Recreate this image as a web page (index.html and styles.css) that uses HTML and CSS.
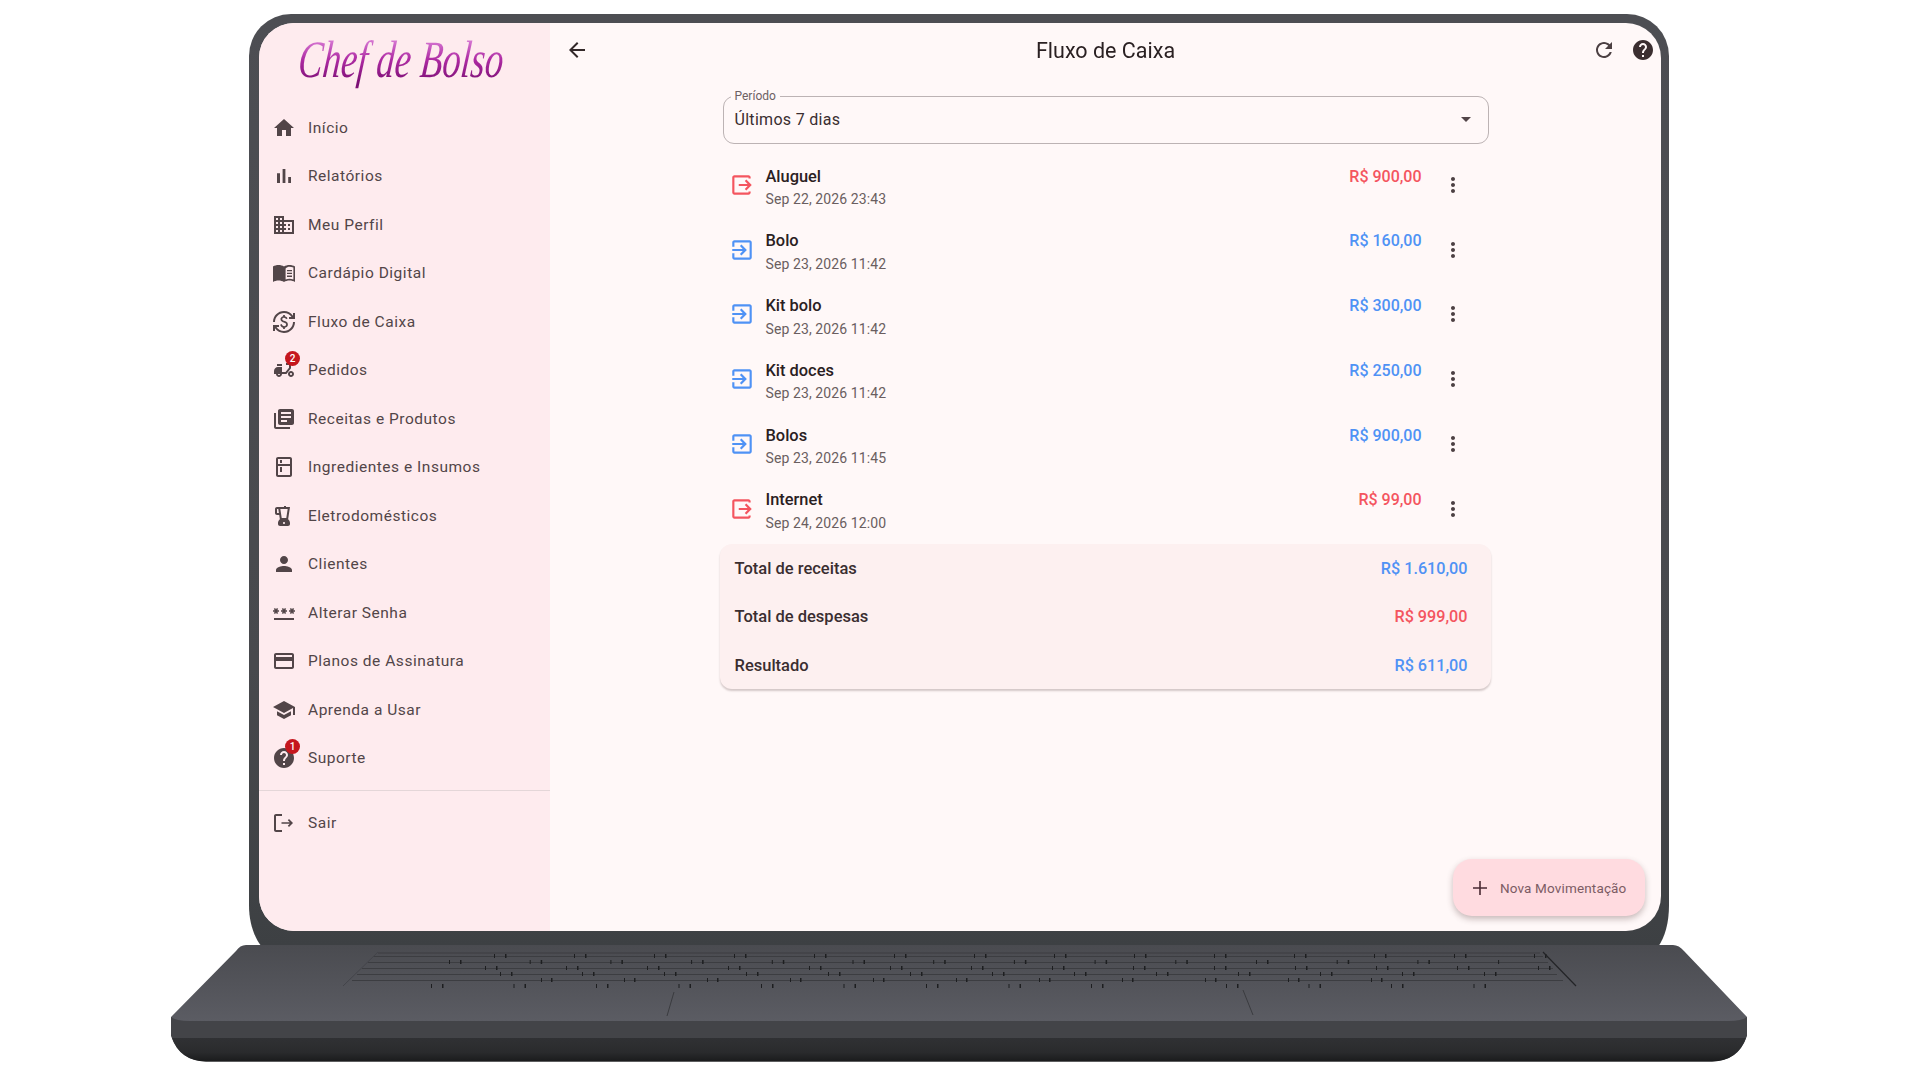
FILE: index.html
```html
<!DOCTYPE html>
<html lang="pt-BR">
<head>
<meta charset="utf-8">
<title>Chef de Bolso - Fluxo de Caixa</title>
<link rel="stylesheet" href="styles.css">
</head>
<body>
<svg class="sprite" aria-hidden="true">
  <symbol id="i-home" viewBox="0 0 24 24"><path d="M10 20v-6h4v6h5v-8h3L12 3 2 12h3v8z"/></symbol>
  <symbol id="i-bar" viewBox="0 0 24 24"><path d="M5 9.2h3V19H5zM10.6 5h2.8v14h-2.8zm5.6 8H19v6h-2.8z"/></symbol>
  <symbol id="i-domain" viewBox="0 0 24 24"><path d="M12 7V3H2v18h20V7H12zM6 19H4v-2h2v2zm0-4H4v-2h2v2zm0-4H4V9h2v2zm0-4H4V5h2v2zm4 12H8v-2h2v2zm0-4H8v-2h2v2zm0-4H8V9h2v2zm0-4H8V5h2v2zm10 12h-8v-2h2v-2h-2v-2h2v-2h-2V9h8v10zm-2-8h-2v2h2v-2zm0 4h-2v2h2v-2z"/></symbol>
  <symbol id="i-book" viewBox="0 0 24 24"><path d="M1 5.5C2.500 4.500 4.500 4 6.500 4 8.500 4 10.500 4.500 12 5.500V21c-1.500-1-3.500-1.500-5.500-1.500S2.500 20 1 21zM12 5.500C13.500 4.500 15.500 4 17.500 4s4 .5 5.500 1.500V21c-1.500-1-3.500-1.500-5.500-1.500S13.500 20 12 21zm1.600 2V18.500c1.200-.5 2.600-.7 3.900-.7 1.200 0 2.400.2 3.900.6V6.600c-1.300-.6-2.600-.9-3.900-.9-1.400 0-2.800.6-3.900 1.800zM15 9h5v1.300h-5zm0 2.800h5v1.300h-5zm0 2.800h5v1.300h-5z" fill-rule="evenodd"/></symbol>
  <symbol id="i-exchange" viewBox="0 0 24 24"><path d="M12.890 11.100c-1.780-.59-2.640-.96-2.640-1.900 0-1.020 1.110-1.390 1.810-1.390 1.310 0 1.790.99 1.900 1.340l1.580-.67c-.15-.44-.82-1.910-2.660-2.230V5h-1.750v1.260c-2.600.56-2.620 2.850-2.620 2.960 0 2.270 2.250 2.910 3.350 3.310 1.580.56 2.280 1.070 2.280 2.030 0 1.130-1.050 1.610-1.980 1.610-1.820 0-2.340-1.870-2.400-2.090l-1.660.67c.63 2.190 2.280 2.780 3.020 2.960V19h1.750v-1.240c.52-.09 3.020-.59 3.020-3.220.01-1.390-.6-2.610-2.990-3.440zM3 21H1v-6h6v2H4.520c1.650 2.410 4.410 4 7.480 4 4.970 0 9-4.030 9-9h2c0 6.080-4.920 11-11 11-3.720 0-7.010-1.850-9-4.670V21zm-2-9C1 5.920 5.920 1 12 1c3.720 0 7.010 1.850 9 4.670V3h2v6h-6V7h2.480C17.830 4.590 15.070 3 12 3c-4.970 0-9 4.030-9 9H1z"/></symbol>
  <symbol id="i-moped" viewBox="0 0 24 24"><path d="M19 7c0-1.100-.9-2-2-2h-3v2h3v2.650L13.520 14H10V9H6c-2.210 0-4 1.790-4 4v3h2c0 1.660 1.340 3 3 3s3-1.340 3-3h4.480L19 10.350V7zM7 17c-.55 0-1-.45-1-1h2c0 .55-.45 1-1 1zM5 6h5v2H5zM19 13c-1.660 0-3 1.340-3 3s1.340 3 3 3 3-1.340 3-3-1.340-3-3-3zm0 4c-.55 0-1-.45-1-1s.45-1 1-1 1 .45 1 1-.45 1-1 1z"/></symbol>
  <symbol id="i-library" viewBox="0 0 24 24"><path d="M4 6H2v14c0 1.100.9 2 2 2h14v-2H4V6zm16-4H8c-1.100 0-2 .9-2 2v12c0 1.100.9 2 2 2h12c1.100 0 2-.9 2-2V4c0-1.100-.9-2-2-2zm-1 9H9V9h10v2zm-4 4H9v-2h6v2zm4-8H9V5h10v2z"/></symbol>
  <symbol id="i-kitchen" viewBox="0 0 24 24"><path d="M18 2.010L6 2c-1.100 0-2 .89-2 2v16c0 1.100.9 2 2 2h12c1.100 0 2-.9 2-2V4c0-1.110-.9-1.990-2-1.990zM18 20H6v-9.020h12V20zm0-11H6V4h12v5zM8 5h2v3H8zm0 7h2v5H8z"/></symbol>
  <symbol id="i-blender" viewBox="0 0 24 24"><path d="M16.130 15.130L18 3h-4V2h-2v1H5c-1.100 0-2 .9-2 2v4c0 1.100.9 2 2 2h2.230l.64 4.130C6.740 16.050 6 17.430 6 19v1c0 1.100.9 2 2 2h8c1.100 0 2-.9 2-2v-1c0-1.570-.74-2.950-1.870-3.870zM5 9V5h1.310l.62 4H5zm7 11c-.55 0-1-.45-1-1s.45-1 1-1 1 .45 1 1-.45 1-1 1zm2.290-6H9.720L8.330 5h7.340l-1.380 9z"/></symbol>
  <symbol id="i-person" viewBox="0 0 24 24"><path d="M12 12c2.210 0 4-1.790 4-4s-1.790-4-4-4-4 1.790-4 4 1.790 4 4 4zm0 2c-2.670 0-8 1.340-8 4v2h16v-2c0-2.660-5.330-4-8-4z"/></symbol>
  <symbol id="i-password" viewBox="0 0 24 24"><path d="M2 17h20v2H2zm1.150-4.050L4 11.470l.85 1.480 1.300-.75-.85-1.480H7v-1.500H5.300l.85-1.470L4.850 7 4 8.470 3.150 7l-1.300.75.85 1.470H1v1.500h1.700l-.85 1.480 1.300.75zm6.700-.75l1.300.75.85-1.480.85 1.480 1.300-.75-.85-1.480H15v-1.500h-1.700l.85-1.470-1.300-.75L12 8.470 11.150 7l-1.300.75.85 1.470H9v1.500h1.700l-.85 1.480zM23 9.220h-1.700l.85-1.470-1.300-.75L20 8.470 19.150 7l-1.300.75.85 1.470H17v1.500h1.700l-.85 1.480 1.300.75.85-1.480.85 1.480 1.300-.75-.85-1.480H23v-1.500z"/></symbol>
  <symbol id="i-card" viewBox="0 0 24 24"><path d="M20 4H4c-1.110 0-1.990.89-1.990 2L2 18c0 1.110.89 2 2 2h16c1.110 0 2-.89 2-2V6c0-1.110-.89-2-2-2zm0 14H4v-6h16v6zm0-10H4V6h16v2z"/></symbol>
  <symbol id="i-school" viewBox="0 0 24 24"><path d="M5 13.180v4L12 21l7-3.820v-4L12 17l-7-3.820zM12 3L1 9l11 6 9-4.910V17h2V9L12 3z"/></symbol>
  <symbol id="i-help" viewBox="0 0 24 24"><path d="M12 2C6.480 2 2 6.480 2 12s4.480 10 10 10 10-4.480 10-10S17.520 2 12 2zm1 17h-2v-2h2v2zm2.070-7.750l-.9.920C13.450 12.900 13 13.500 13 15h-2v-.5c0-1.100.45-2.100 1.170-2.830l1.240-1.260c.37-.36.59-.86.59-1.410 0-1.100-.9-2-2-2s-2 .9-2 2H8c0-2.210 1.790-4 4-4s4 1.790 4 4c0 .88-.36 1.680-.93 2.250z"/></symbol>
  <symbol id="i-logout" viewBox="0 0 24 24"><path d="M17 8l-1.200 1.200L17.800 11.200H9.500v1.600h8.300l-2 2L17 16l4-4zM4 5h6V3H4c-1.100 0-2 .9-2 2v14c0 1.100.9 2 2 2h6v-2H4V5z"/></symbol>
  <symbol id="i-back" viewBox="0 0 24 24"><path d="M20 11H7.830l5.590-5.590L12 4l-8 8 8 8 1.410-1.410L7.830 13H20v-2z"/></symbol>
  <symbol id="i-refresh" viewBox="0 0 24 24"><path d="M17.650 6.350C16.200 4.900 14.210 4 12 4c-4.420 0-7.990 3.580-7.990 8s3.570 8 7.990 8c3.730 0 6.840-2.550 7.730-6h-2.080c-.82 2.330-3.040 4-5.650 4-3.310 0-6-2.690-6-6s2.690-6 6-6c1.660 0 3.140.69 4.220 1.780L13 11h7V4l-2.350 2.350z"/></symbol>
  <symbol id="i-more" viewBox="0 0 24 24"><path d="M12 8c1.100 0 2-.9 2-2s-.9-2-2-2-2 .9-2 2 .9 2 2 2zm0 2c-1.100 0-2 .9-2 2s.9 2 2 2 2-.9 2-2-.9-2-2-2zm0 6c-1.100 0-2 .9-2 2s.9 2 2 2 2-.9 2-2-.9-2-2-2z"/></symbol>
  <symbol id="i-in" viewBox="0 0 24 24"><path d="M10.090 15.590L11.500 17l5-5-5-5-1.410 1.410L12.670 11H3v2h9.670l-2.580 2.590zM19 3H5c-1.110 0-2 .9-2 2v4h2V5h14v14H5v-4H3v4c0 1.100.89 2 2 2h14c1.100 0 2-.9 2-2V5c0-1.100-.9-2-2-2z"/></symbol>
  <symbol id="i-out" viewBox="0 0 24 24"><path d="M14.590 15.590L16 17l5-5-5-5-1.410 1.410L17.170 11H9v2h8.170l-2.580 2.590zM5 3h13c1.100 0 2 .9 2 2v1h-2V5H5v14h13v-1h2v1c0 1.100-.9 2-2 2H5c-1.110 0-2-.9-2-2V5c0-1.100.89-2 2-2z"/></symbol>
  <symbol id="i-plus" viewBox="0 0 24 24"><path d="M19 12.800h-6.200V19h-1.600v-6.200H5v-1.600h6.200V5h1.600v6.200H19z"/></symbol>
</svg>

<svg class="laptop" viewBox="0 0 1920 1080" aria-hidden="true">
  <defs>
    <linearGradient id="lid" x1="0" y1="0" x2="0" y2="1">
      <stop offset="0" stop-color="#4d4e53"/><stop offset="0.7" stop-color="#48494d"/><stop offset="1" stop-color="#3d4043"/>
    </linearGradient>
    <linearGradient id="deck" x1="0" y1="0" x2="0" y2="1">
      <stop offset="0" stop-color="#4a4b50"/><stop offset="1" stop-color="#5b5c63"/>
    </linearGradient>
    <linearGradient id="lip" x1="0" y1="0" x2="0" y2="1">
      <stop offset="0" stop-color="#303134"/><stop offset="0.6" stop-color="#2a2b2d"/><stop offset="1" stop-color="#1a1b1c"/>
    </linearGradient>
    <filter id="soft" x="-5%" y="-50%" width="110%" height="200%"><feGaussianBlur stdDeviation="4"/></filter>
  </defs>
  <path d="M176 1060H1742" stroke="#a8a8a8" stroke-width="3" filter="url(#soft)"/>
  <path d="M249 56a42 42 0 0 1 42-42H1627a42 42 0 0 1 42 42V905c0 18-4 32-11 42H262c-8-10-13-24-13-42z" fill="url(#lid)"/>
  <path d="M171 1017H1747V1036Q1738 1061 1712 1061.500H206Q180 1061 171 1036z" fill="#434448"/>
  <path d="M246 945H1673q6 0 11 6L1747 1017Q1742 1021 1728 1021H190Q176 1021 171 1017L236 951q4-6 10-6z" fill="url(#deck)"/>
  <path d="M172 1038H1746Q1738 1061 1712 1061.500H206Q180 1061 172 1038z" fill="url(#lip)"/>
  <g class="kb-rows">
    <path d="M378 953H1540M373 956.500H1543M368 962.500H1548M362 968.500H1553M357 974.500H1557M352 980.500H1563"/>
  </g>
  <g class="kb-ticks">
    <line x1="494" x2="1548" y1="956" y2="956" stroke-dasharray="1 10 1.500 67.500"/>
    <line x1="449" x2="1500" y1="962" y2="962" stroke-dasharray="1 10 1.500 68.200"/>
    <line x1="485" x2="1555" y1="968" y2="968" stroke-dasharray="1 10 1.500 68.500"/>
    <line x1="500" x2="1500" y1="974" y2="974" stroke-dasharray="1 10 1.500 69.500"/>
    <line x1="541" x2="1450" y1="980" y2="980" stroke-dasharray="1 9 1.500 71.500"/>
    <line x1="431" x2="1130" y1="986" y2="986" stroke-dasharray="1 10 1.500 70"/>
    <line x1="1226" x2="1490" y1="986" y2="986" stroke-dasharray="1 10 1.500 70"/>
  </g>
  <path class="kb-edge" d="M1543 952L1576 986"/>
  <path class="kb-pad" d="M674 992L667 1016M1243 990L1253 1015"/>
  <path class="kb-soft" d="M378 952L343 986"/>
</svg>

<div class="screen">
  <aside class="sidebar">
    <div class="logo"><span class="logo-text">Chef de Bolso</span></div>
    <nav class="nav">
      <a class="nav-item"><span class="nav-icon"><svg><use href="#i-home"/></svg></span>Início</a>
      <a class="nav-item"><span class="nav-icon"><svg><use href="#i-bar"/></svg></span>Relatórios</a>
      <a class="nav-item"><span class="nav-icon"><svg><use href="#i-domain"/></svg></span>Meu Perfil</a>
      <a class="nav-item"><span class="nav-icon"><svg><use href="#i-book"/></svg></span>Cardápio Digital</a>
      <a class="nav-item"><span class="nav-icon"><svg><use href="#i-exchange"/></svg></span>Fluxo de Caixa</a>
      <a class="nav-item"><span class="nav-icon"><svg><use href="#i-moped"/></svg><b class="badge">2</b></span>Pedidos</a>
      <a class="nav-item"><span class="nav-icon"><svg><use href="#i-library"/></svg></span>Receitas e Produtos</a>
      <a class="nav-item"><span class="nav-icon"><svg><use href="#i-kitchen"/></svg></span>Ingredientes e Insumos</a>
      <a class="nav-item"><span class="nav-icon"><svg><use href="#i-blender"/></svg></span>Eletrodomésticos</a>
      <a class="nav-item"><span class="nav-icon"><svg><use href="#i-person"/></svg></span>Clientes</a>
      <a class="nav-item"><span class="nav-icon"><svg><use href="#i-password"/></svg></span>Alterar Senha</a>
      <a class="nav-item"><span class="nav-icon"><svg><use href="#i-card"/></svg></span>Planos de Assinatura</a>
      <a class="nav-item"><span class="nav-icon"><svg><use href="#i-school"/></svg></span>Aprenda a Usar</a>
      <a class="nav-item"><span class="nav-icon"><svg><use href="#i-help"/></svg><b class="badge">1</b></span>Suporte</a>
    </nav>
    <div class="nav-divider"></div>
    <a class="nav-item"><span class="nav-icon"><svg><use href="#i-logout"/></svg></span>Sair</a>
  </aside>

  <main class="main">
    <header class="appbar">
      <svg class="bar-icon back"><use href="#i-back"/></svg>
      <h1 class="title">Fluxo de Caixa</h1>
      <div class="bar-actions">
        <svg class="bar-icon refresh"><use href="#i-refresh"/></svg>
        <svg class="bar-icon help"><use href="#i-help"/></svg>
      </div>
    </header>

    <section class="content">
      <div class="select">
        <span class="select-label">Período</span>
        <span class="select-value">Últimos 7 dias</span>
        <span class="select-arrow"></span>
      </div>

      <ul class="list">
        <li class="row expense">
          <svg class="row-icon"><use href="#i-out"/></svg>
          <div class="row-text"><div class="row-title">Aluguel</div><div class="row-date">Sep 22, 2026 23:43</div></div>
          <div class="row-amount">R$ 900,00</div>
          <svg class="row-more"><use href="#i-more"/></svg>
        </li>
        <li class="row income">
          <svg class="row-icon"><use href="#i-in"/></svg>
          <div class="row-text"><div class="row-title">Bolo</div><div class="row-date">Sep 23, 2026 11:42</div></div>
          <div class="row-amount">R$ 160,00</div>
          <svg class="row-more"><use href="#i-more"/></svg>
        </li>
        <li class="row income">
          <svg class="row-icon"><use href="#i-in"/></svg>
          <div class="row-text"><div class="row-title">Kit bolo</div><div class="row-date">Sep 23, 2026 11:42</div></div>
          <div class="row-amount">R$ 300,00</div>
          <svg class="row-more"><use href="#i-more"/></svg>
        </li>
        <li class="row income">
          <svg class="row-icon"><use href="#i-in"/></svg>
          <div class="row-text"><div class="row-title">Kit doces</div><div class="row-date">Sep 23, 2026 11:42</div></div>
          <div class="row-amount">R$ 250,00</div>
          <svg class="row-more"><use href="#i-more"/></svg>
        </li>
        <li class="row income">
          <svg class="row-icon"><use href="#i-in"/></svg>
          <div class="row-text"><div class="row-title">Bolos</div><div class="row-date">Sep 23, 2026 11:45</div></div>
          <div class="row-amount">R$ 900,00</div>
          <svg class="row-more"><use href="#i-more"/></svg>
        </li>
        <li class="row expense">
          <svg class="row-icon"><use href="#i-out"/></svg>
          <div class="row-text"><div class="row-title">Internet</div><div class="row-date">Sep 24, 2026 12:00</div></div>
          <div class="row-amount">R$ 99,00</div>
          <svg class="row-more"><use href="#i-more"/></svg>
        </li>
      </ul>

      <div class="summary">
        <div class="summary-row income"><span class="summary-label">Total de receitas</span><span class="summary-value">R$ 1.610,00</span></div>
        <div class="summary-row expense"><span class="summary-label">Total de despesas</span><span class="summary-value">R$ 999,00</span></div>
        <div class="summary-row income"><span class="summary-label">Resultado</span><span class="summary-value">R$ 611,00</span></div>
      </div>
    </section>

    <button class="fab"><svg class="fab-icon"><use href="#i-plus"/></svg>Nova Movimentação</button>
  </main>
</div>
</body>
</html>
```

FILE: styles.css
```css
* { box-sizing: border-box; }

html, body {
  margin: 0;
  width: 1920px;
  height: 1080px;
  overflow: hidden;
  background: #fff;
}

body {
  position: relative;
  font-family: Roboto, "Liberation Sans", sans-serif;
  color: #241a1c;
}

.sprite { display: none; }

.laptop {
  position: absolute;
  left: 0;
  top: 0;
  width: 1920px;
  height: 1080px;
}

.kb-rows path { fill: none; stroke: #3c3d41; stroke-width: 1.200; }
.kb-ticks line { stroke: #1d1e20; stroke-width: 4; }
.kb-edge { fill: none; stroke: #232427; stroke-width: 1.200; }
.kb-pad { fill: none; stroke: #3a3b3f; stroke-width: 1; }
.kb-soft { fill: none; stroke: #43444a; stroke-width: 1; }

/* Screen */
.screen {
  position: absolute;
  left: 259px;
  top: 23px;
  width: 1402px;
  height: 908px;
  display: flex;
  border-radius: 35px;
  overflow: hidden;
  background: #fff8f8;
  filter: blur(0.35px);
}

/* Sidebar */
.sidebar {
  width: 291px;
  flex: none;
  background: #feebee;
  display: flex;
  flex-direction: column;
}

.logo {
  height: 80.500px;
  padding: 4px 0 0 43px;
}

.logo-text {
  display: inline-block;
  font-family: "Liberation Serif", serif;
  font-style: italic;
  font-size: 42px;
  line-height: 52px;
  white-space: nowrap;
  transform-origin: left top;
  transform: scale(0.87, 1.25) skewX(-8deg);
  background: linear-gradient(180deg, #e28de0 12%, #ae2ba3 50%, #7d0f75 85%);
  -webkit-background-clip: text;
  background-clip: text;
  color: transparent;
}

.nav { display: flex; flex-direction: column; }

.nav-item {
  height: 48.500px;
  display: flex;
  align-items: center;
  padding-left: 13px;
  font-size: 15.500px;
  letter-spacing: 0.520px;
  color: #524548;
  white-space: nowrap;
}

.nav-icon {
  position: relative;
  width: 24px;
  height: 24px;
  margin-right: 12px;
  flex: none;
}

.nav-icon svg { width: 24px; height: 24px; fill: #524548; display: block; }

.badge {
  position: absolute;
  right: -4px;
  top: -7px;
  width: 15px;
  height: 15px;
  border-radius: 50%;
  background: #c5161d;
  color: #fff;
  font-size: 10px;
  font-weight: 500;
  line-height: 15px;
  letter-spacing: 0;
  text-align: center;
}

.nav-divider {
  height: 1px;
  margin: 7.500px 0 7.500px;
  background: #e4d6d8;
}

/* Main */
.main {
  position: relative;
  flex: 1;
  display: flex;
  flex-direction: column;
  min-width: 0;
}

.appbar {
  height: 54px;
  flex: none;
  display: flex;
  align-items: center;
  justify-content: space-between;
  padding: 0 6px 0 15px;
  position: relative;
}

.title {
  position: absolute;
  left: 0;
  right: 0;
  margin: 0;
  text-align: center;
  font-size: 21.500px;
  font-weight: 400;
  color: #2a2022;
}

.bar-icon { width: 24px; height: 24px; fill: #332829; display: block; }
.bar-actions { display: flex; gap: 15px; align-items: center; }
.bar-icon.help { fill: #3b2e30; }
.bar-icon.refresh { fill: #4c4043; }

.content {
  width: 764px;
  margin: 0 auto;
  padding-top: 18.500px;
}

.select {
  position: relative;
  height: 48px;
  margin: 0 -1px;
  border: 1.500px solid #bcb3b4;
  border-radius: 11px;
  display: flex;
  align-items: center;
  padding: 0 11px;
}

.select-label {
  position: absolute;
  left: 7px;
  top: -8px;
  padding: 0 4px;
  background: #fff8f8;
  font-size: 12px;
  line-height: 14px;
  color: #6d6163;
}

.select-value {
  font-size: 16px;
  letter-spacing: 0.300px;
  color: #3a2e30;
}

.select-arrow {
  position: absolute;
  right: 17px;
  top: 20px;
  width: 0;
  height: 0;
  border-left: 5px solid transparent;
  border-right: 5px solid transparent;
  border-top: 5px solid #524548;
}

.list {
  list-style: none;
  margin: 9px 0 0;
  padding: 0;
}

.row {
  height: 64.800px;
  display: flex;
  align-items: center;
  padding-left: 5px;
}

.row-icon { width: 26px; height: 26px; flex: none; display: block; }
.row-text {
  flex: 1;
  margin-left: 11px;
  align-self: flex-start;
  padding-top: 14px;
}
.row-title { font-size: 16.400px; font-weight: 500; line-height: 20px; color: #2a2022; }
.row-date { font-size: 14px; line-height: 18px; margin-top: 3.500px; letter-spacing: 0.100px; color: #6a5e60; }
.row-amount {
  align-self: flex-start;
  padding-top: 14px;
  font-size: 16px;
  font-weight: 500;
  line-height: 20px;
  white-space: nowrap;
}
.row-more { width: 24px; height: 24px; fill: #4c4043; margin: 0 23px 0 19px; flex: none; display: block; }

.expense .row-icon { fill: #f4555f; }
.income .row-icon { fill: #4f92f5; }
.expense .row-amount, .expense .summary-value { color: #f4555f; }
.income .row-amount, .income .summary-value { color: #4f92f5; }

.summary {
  width: 771px;
  margin: 3px 0 0 -4px;
  height: 145px;
  border-radius: 12px;
  background: #fdf0f0;
  box-shadow: 0 2px 2px rgba(60, 30, 30, 0.220);
  padding: 0 23px 0 15px;
  display: flex;
  flex-direction: column;
}

.summary-row {
  height: 48.500px;
  display: flex;
  align-items: center;
  justify-content: space-between;
}

.summary-label { font-size: 16.500px; font-weight: 500; color: #3a2e30; }
.summary-value { font-size: 16.200px; font-weight: 500; }

.fab {
  position: absolute;
  right: 16px;
  bottom: 15px;
  width: 192px;
  height: 57px;
  border: 0;
  border-radius: 19px;
  background: #ffdbe0;
  box-shadow: 0 3px 6px rgba(70, 40, 40, 0.300);
  display: flex;
  align-items: center;
  padding: 0 0 0 15px;
  font-family: Roboto, "Liberation Sans", sans-serif;
  font-size: 13.500px;
  letter-spacing: 0.150px;
  color: #7c5c64;
  white-space: nowrap;
}

.fab-icon { width: 24px; height: 24px; fill: #4a2a33; margin-right: 8px; flex: none; }
```
